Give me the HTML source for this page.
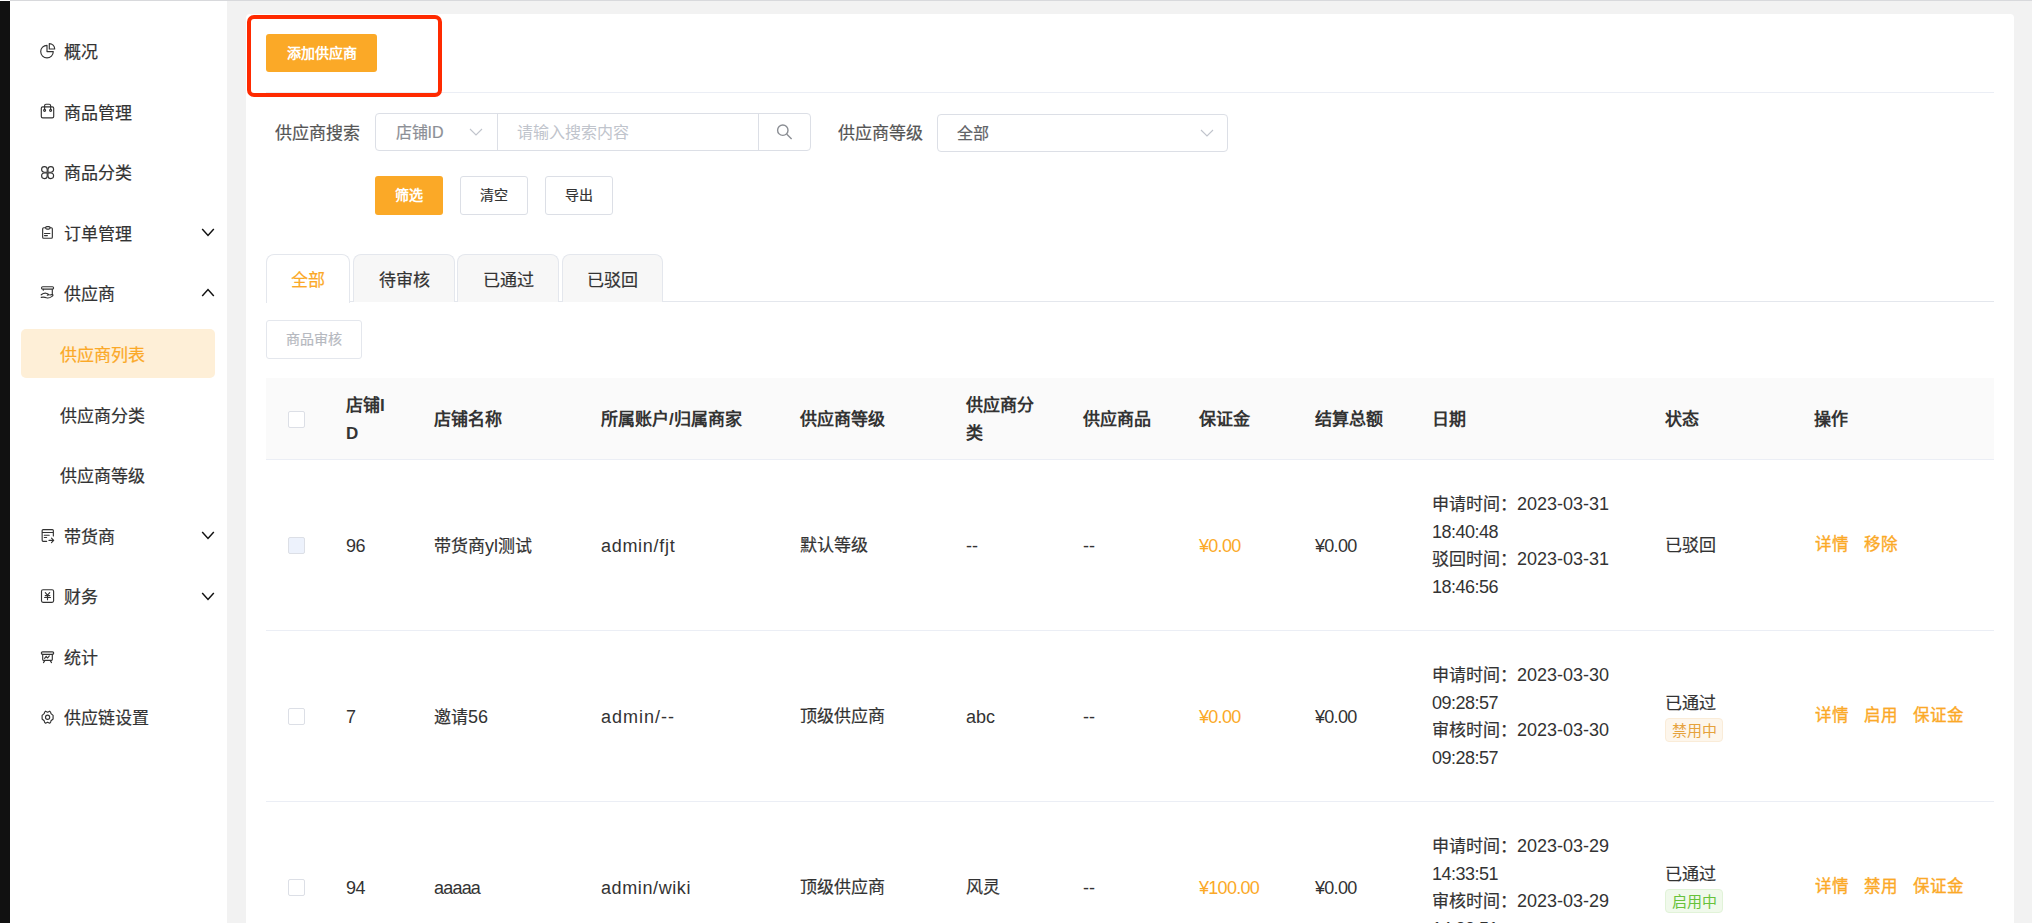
<!DOCTYPE html>
<html lang="zh-CN"><head><meta charset="utf-8">
<style>
*{box-sizing:border-box;margin:0;padding:0}
html,body{width:2032px;height:923px;overflow:hidden}
body{position:relative;background:#f2f2f2;font-family:"Liberation Sans",sans-serif;color:#333;font-size:17px}
.a{position:absolute}
.topline{left:10px;top:0;width:2022px;height:1px;background:#d8d9dc}
.black{left:0;top:1px;width:10px;height:922px;background:#111}
.side{left:10px;top:1px;width:217px;height:922px;background:#fff}
.mt{position:absolute;left:64px;height:30px;line-height:30px;font-size:17px;color:#333;white-space:nowrap}
.mt.sub{left:59.5px}
svg.ic{position:absolute;left:38px;width:20px;height:20px}
svg.ch{position:absolute;left:200px;width:16px;height:16px}
.active{left:21px;top:329px;width:194px;height:49px;background:#feefd7;border-radius:5px}
.card{left:246px;top:14px;width:1768px;height:920px;background:#fff;border-radius:4px}
.redbox{left:247px;top:15px;width:195px;height:82px;border:4px solid #ff2a00;border-radius:7px}
.btn{position:absolute;height:38px;line-height:38px;text-align:center;font-size:14px;border-radius:3px;white-space:nowrap}
.pri{background:#fba927;color:#fff;font-weight:bold}
.def{background:#fff;border:1px solid #dcdfe6;color:#333;line-height:36px}
.divider{left:266px;top:92px;width:1728px;height:1px;background:#ebeef5}
.lbl{position:absolute;font-size:17px;color:#555;line-height:30px;white-space:nowrap}
.inp{position:absolute;border:1px solid #dcdfe6;border-radius:4px;background:#fff}
.tab{position:absolute;top:254px;height:48px;border:1px solid #e4e7ed;border-bottom:none;border-radius:8px 8px 0 0;background:#f7f7f7;text-align:center;line-height:51.5px;font-size:17px;color:#333}
.tab.on{background:#fff;color:#fba927;height:49px}
.th{position:absolute;font-weight:bold;color:#333;line-height:28px;font-size:17px;white-space:nowrap}
.td{position:absolute;color:#333;line-height:28px;font-size:17px;white-space:nowrap}
.cb{position:absolute;left:288px;width:16.5px;height:17px;border:1px solid #dcdfe6;border-radius:2px;background:#fff}
.cb.dis{background:#edf2fc;border-color:#dcdfe6}
.hline{position:absolute;left:266px;width:1728px;height:1px;background:#ebeef5}
.org{color:#fba927}
.lk{color:#fba927;font-weight:normal;font-size:16.5px;margin-right:15px}
.l{font-size:18px;-webkit-text-stroke-width:0}
.mt,.lbl,.td,.tab,.def{-webkit-text-stroke-width:0.2px}
.tag{-webkit-text-stroke-width:0}
.lk{-webkit-text-stroke-width:0.35px}
.tag{position:absolute;height:24px;line-height:24px;font-size:15px;padding:0 5.6px;border-radius:4px;border:1px solid}
.tag.w{background:#fdf6ec;border-color:#faecd8;color:#e6a23c}
.tag.g{background:#f0f9eb;border-color:#e1f3d8;color:#67c23a}
</style></head><body>
<div class="a" style="left:0;top:0;width:10px;height:1px;background:#fff"></div>
<div class="a topline"></div>
<div class="a black"></div>
<div class="a side"></div>
<div class="a active"></div>
<div class="mt" style="top:38.00px;color:#333">概况</div>
<svg class="ic" style="top:40.60px" viewBox="0 0 20 20"><path fill="none" stroke="#333" stroke-width="1.15" stroke-linecap="round" stroke-linejoin="round" d="M9 4.3A6.3 6.3 0 1 0 15.3 10.6H9Z"/><path fill="none" stroke="#333" stroke-width="1.15" stroke-linecap="round" stroke-linejoin="round" d="M11.3 2.6A5.4 5.4 0 0 1 16.7 8H11.3Z"/></svg>
<div class="mt" style="top:98.59px;color:#333">商品管理</div>
<svg class="ic" style="top:101.19px" viewBox="0 0 20 20"><rect fill="none" stroke="#333" stroke-width="1.15" stroke-linecap="round" stroke-linejoin="round" x="3.3" y="5.8" width="12.4" height="11" rx="1.4"/><path fill="none" stroke="#333" stroke-width="1.15" stroke-linecap="round" stroke-linejoin="round" d="M6.6 8.4V4.6Q6.6 3.2 8 3.2H11.2Q12.6 3.2 12.6 4.6V8.4"/><circle fill="none" stroke="#333" stroke-width="1.15" stroke-linecap="round" stroke-linejoin="round" cx="6.6" cy="9.3" r="1"/><circle fill="none" stroke="#333" stroke-width="1.15" stroke-linecap="round" stroke-linejoin="round" cx="12.6" cy="9.3" r="1"/></svg>
<div class="mt" style="top:159.18px;color:#333">商品分类</div>
<svg class="ic" style="top:161.78px" viewBox="0 0 20 20"><path fill="none" stroke="#333" stroke-width="1.15" stroke-linecap="round" stroke-linejoin="round" d="M9.2 10.2V7.3A2.8 2.8 0 1 0 6.3 10.2Z"/><path fill="none" stroke="#333" stroke-width="1.15" stroke-linecap="round" stroke-linejoin="round" d="M10 10.2V7.3A2.8 2.8 0 1 1 12.9 10.2Z"/><path fill="none" stroke="#333" stroke-width="1.15" stroke-linecap="round" stroke-linejoin="round" d="M9.2 11V13.9A2.8 2.8 0 1 1 6.3 11Z"/><path fill="none" stroke="#333" stroke-width="1.15" stroke-linecap="round" stroke-linejoin="round" d="M10 11V13.9A2.8 2.8 0 1 0 12.9 11Z"/></svg>
<div class="mt" style="top:219.77px;color:#333">订单管理</div>
<svg class="ic" style="top:222.00px" viewBox="0 0 20 20"><path fill="none" stroke="#333" stroke-width="1.15" stroke-linecap="round" stroke-linejoin="round" d="M7.6 5.75H5.65Q4.65 5.75 4.65 6.75V15.25Q4.65 16.25 5.65 16.25H13.35Q14.35 16.25 14.35 15.25V6.75Q14.35 5.75 13.35 5.75H12.1"/><rect fill="none" stroke="#333" stroke-width="1.15" stroke-linecap="round" stroke-linejoin="round" x="7.6" y="4.6" width="4.5" height="2.5" rx="1.25"/><path fill="none" stroke="#333" stroke-width="1.15" stroke-linecap="round" stroke-linejoin="round" d="M6.5 11.5H11.9M6.5 13.6H9.4"/></svg>
<svg class="ch" style="top:224.17px" viewBox="0 0 16 16"><path d="M2.2 5L8 11.4L13.8 5" fill="none" stroke="#111" stroke-width="1.5"/></svg>
<div class="mt" style="top:280.36px;color:#333">供应商</div>
<svg class="ic" style="top:282.96px" viewBox="0 0 20 20"><rect fill="none" stroke="#333" stroke-width="1.15" stroke-linecap="round" stroke-linejoin="round" x="3.5" y="3.7" width="12.1" height="2.4" rx="1.2"/><path fill="none" stroke="#333" stroke-width="1.15" stroke-linecap="round" stroke-linejoin="round" d="M14.3 6.2V10.4M5.3 6.2V7.2"/><path fill="none" stroke="#333" stroke-width="1.15" stroke-linecap="round" stroke-linejoin="round" d="M3.2 11.8Q5.5 10 8 10.2Q9.6 10.4 11 11.6L9.3 12.2M3.2 14.4Q6 13.8 8.5 14.8Q11 15.6 14 13.4Q15.6 12.2 14.6 11.4L12 12"/></svg>
<svg class="ch" style="top:284.46px;left:199.5px" viewBox="0 0 16 16"><path d="M2.2 12L8 5.6L13.8 12" fill="none" stroke="#111" stroke-width="1.5"/></svg>
<div class="mt sub" style="top:340.95px;color:#fba927">供应商列表</div>
<div class="mt sub" style="top:401.54px;color:#333">供应商分类</div>
<div class="mt sub" style="top:462.13px;color:#333">供应商等级</div>
<div class="mt" style="top:522.72px;color:#333">带货商</div>
<svg class="ic" style="top:525.00px" viewBox="0 0 20 20"><path fill="none" stroke="#333" stroke-width="1.15" stroke-linecap="round" stroke-linejoin="round" d="M8.7 16.35H5.15Q4.15 16.35 4.15 15.35V5.55Q4.15 4.55 5.15 4.55H14.35Q15.35 4.55 15.35 5.55V11M4.15 7.5H15.35"/><path fill="none" stroke="#333" stroke-width="1.15" stroke-linecap="round" stroke-linejoin="round" d="M6.3 10.2H11.2M6.3 12.5H8.6M11 15.4H15.5M13.5 13.2L15.7 15.4L13.5 17.6"/></svg>
<svg class="ch" style="top:527.12px" viewBox="0 0 16 16"><path d="M2.2 5L8 11.4L13.8 5" fill="none" stroke="#111" stroke-width="1.5"/></svg>
<div class="mt" style="top:583.31px;color:#333">财务</div>
<svg class="ic" style="top:585.91px" viewBox="0 0 20 20"><rect fill="none" stroke="#333" stroke-width="1.15" stroke-linecap="round" stroke-linejoin="round" x="3.5" y="3.7" width="12.1" height="12.6" rx="1.5"/><path fill="none" stroke="#333" stroke-width="1.15" stroke-linecap="round" stroke-linejoin="round" d="M7.3 6.6L9.5 9.1L11.7 6.6M6.6 11.5H12.5M7.2 9.6H11.8M9.5 9.1V13.7"/></svg>
<svg class="ch" style="top:587.71px" viewBox="0 0 16 16"><path d="M2.2 5L8 11.4L13.8 5" fill="none" stroke="#111" stroke-width="1.5"/></svg>
<div class="mt" style="top:643.90px;color:#333">统计</div>
<svg class="ic" style="top:646.50px" viewBox="0 0 20 20"><rect fill="none" stroke="#333" stroke-width="1.15" stroke-linecap="round" stroke-linejoin="round" x="3.3" y="4.8" width="12.4" height="2.6" rx="1.3"/><path fill="none" stroke="#333" stroke-width="1.15" stroke-linecap="round" stroke-linejoin="round" d="M4.7 7.4V12.6Q4.7 13.4 5.5 13.4H13.5Q14.3 13.4 14.3 12.6V7.4M6.9 13.4L5.5 15.6M12.1 13.4L13.5 15.6M6.6 11.3L8.2 9.3L9.6 11L11.3 8.9"/></svg>
<div class="mt" style="top:704.49px;color:#333">供应链设置</div>
<svg class="ic" style="top:707.09px" viewBox="0 0 20 20"><path fill="none" stroke="#333" stroke-width="1.15" stroke-linecap="round" stroke-linejoin="round" d="M7.5 4.2L9.6 5.2L11.7 4.2Q12.9 5 13 6.6L15.1 8.4L15.1 12L13 13.8Q12.9 15.4 11.7 16.2L9.6 15.2L7.5 16.2Q6.3 15.4 6.2 13.8L4.1 12L4.1 8.4L6.2 6.6Q6.3 5 7.5 4.2Z"/><circle fill="none" stroke="#333" stroke-width="1.15" stroke-linecap="round" stroke-linejoin="round" cx="9.6" cy="10.2" r="2.1"/></svg>
<div class="a card"></div>
<div class="btn pri" style="left:266px;top:34px;width:111px">添加供应商</div>
<div class="a divider"></div>

<div class="lbl" style="left:275px;top:119px">供应商搜索</div>
<div class="inp" style="left:375px;top:113px;width:436px;height:38px"></div>
<div class="a" style="left:497px;top:113px;width:1px;height:38px;background:#dcdfe6"></div>
<div class="a" style="left:758px;top:113px;width:1px;height:38px;background:#dcdfe6"></div>
<div class="lbl" style="left:395.5px;top:118px;font-size:16px;color:#8c8f96">店铺ID</div>
<svg class="a" style="left:466px;top:124px;width:20px;height:16px" viewBox="0 0 20 16"><path d="M4 5L10 11L16 5" fill="none" stroke="#c0c4cc" stroke-width="1.1"/></svg>
<div class="lbl" style="left:516.5px;top:118px;font-size:16px;color:#c0c4cc;-webkit-text-stroke-width:0">请输入搜索内容</div>
<svg class="a" style="left:774px;top:122px;width:20px;height:20px" viewBox="0 0 20 20"><circle cx="8.8" cy="8.2" r="5.2" fill="none" stroke="#8a8d93" stroke-width="1.4"/><path d="M12.6 12L17.6 17" stroke="#8a8d93" stroke-width="1.4"/></svg>
<div class="lbl" style="left:838px;top:119px">供应商等级</div>
<div class="inp" style="left:937px;top:114.3px;width:291px;height:38px"></div>
<div class="lbl" style="left:957px;top:119.3px;font-size:16px;color:#606266">全部</div>
<svg class="a" style="left:1197px;top:125.3px;width:20px;height:16px" viewBox="0 0 20 16"><path d="M4 5L10 11L16 5" fill="none" stroke="#c0c4cc" stroke-width="1.1"/></svg>

<div class="btn pri" style="left:375px;top:176px;width:68px;height:39px;line-height:39px">筛选</div>
<div class="btn def" style="left:460px;top:176px;width:68px;height:39px;line-height:37px">清空</div>
<div class="btn def" style="left:545px;top:176px;width:68px;height:39px;line-height:37px">导出</div>

<div class="a" style="left:266px;top:301px;width:1728px;height:1px;background:#e4e7ed"></div>
<div class="tab on" style="left:266px;width:84px">全部</div>
<div class="tab" style="left:353px;width:102px">待审核</div>
<div class="tab" style="left:457px;width:102px">已通过</div>
<div class="tab" style="left:562px;width:101px">已驳回</div>

<div class="btn def" style="left:266px;top:320px;width:96px;height:39px;line-height:37px;color:#b6b9c0;border-color:#e4e7ed">商品审核</div>

<div class="a" style="left:266px;top:378px;width:1728px;height:81px;background:#fafafa"></div>
<div class="hline" style="top:459px"></div>
<div class="cb" style="top:411px"></div>
<div class="th" style="left:346px;top:392.4px">店铺I</div>
<div class="th" style="left:346px;top:420.0px">D</div>
<div class="th" style="left:434px;top:406.2px">店铺名称</div>
<div class="th" style="left:601px;top:406.2px">所属账户/归属商家</div>
<div class="th" style="left:800px;top:406.2px">供应商等级</div>
<div class="th" style="left:966px;top:392.4px">供应商分</div>
<div class="th" style="left:966px;top:420.0px">类</div>
<div class="th" style="left:1083px;top:406.2px">供应商品</div>
<div class="th" style="left:1199px;top:406.2px">保证金</div>
<div class="th" style="left:1315px;top:406.2px">结算总额</div>
<div class="th" style="left:1432px;top:406.2px">日期</div>
<div class="th" style="left:1665px;top:406.2px">状态</div>
<div class="th" style="left:1814px;top:406.2px">操作</div>
<div class="cb dis" style="top:536.5px"></div>
<div class="td" style="left:346px;top:531.5px"><span class="l" style="letter-spacing:-0.5px">96</span></div>
<div class="td" style="left:434px;top:531.5px">带货商<span class="l">yl</span>测试</div>
<div class="td" style="left:601px;top:531.5px"><span class="l" style="letter-spacing:0.7px">admin/fjt</span></div>
<div class="td" style="left:800px;top:531.5px">默认等级</div>
<div class="td" style="left:966px;top:531.5px"><span class="l">--</span></div>
<div class="td" style="left:1083px;top:531.5px"><span class="l">--</span></div>
<div class="td" style="left:1199px;top:531.5px"><span class="l org" style="letter-spacing:-0.7px">¥0.00</span></div>
<div class="td" style="left:1315px;top:531.5px"><span class="l" style="letter-spacing:-0.7px">¥0.00</span></div>
<div class="td" style="left:1432px;top:489.9px">申请时间：<span class="l">2023-03-31</span></div>
<div class="td" style="left:1432px;top:517.6px"><span class="l" style="letter-spacing:-0.5px">18:40:48</span></div>
<div class="td" style="left:1432px;top:545.2px">驳回时间：<span class="l">2023-03-31</span></div>
<div class="td" style="left:1432px;top:572.9px"><span class="l" style="letter-spacing:-0.5px">18:46:56</span></div>
<div class="td" style="left:1665px;top:532.0px">已驳回</div>
<div class="td acts" style="left:1815px;top:530.0px"><span class="lk">详情</span><span class="lk">移除</span></div>
<div class="hline" style="top:630px"></div>
<div class="cb" style="top:707.5px"></div>
<div class="td" style="left:346px;top:702.5px"><span class="l" style="letter-spacing:-0.5px">7</span></div>
<div class="td" style="left:434px;top:702.5px">邀请<span class="l">56</span></div>
<div class="td" style="left:601px;top:702.5px"><span class="l" style="letter-spacing:1.0px">admin/--</span></div>
<div class="td" style="left:800px;top:702.5px">顶级供应商</div>
<div class="td" style="left:966px;top:702.5px"><span class="l">abc</span></div>
<div class="td" style="left:1083px;top:702.5px"><span class="l">--</span></div>
<div class="td" style="left:1199px;top:702.5px"><span class="l org" style="letter-spacing:-0.7px">¥0.00</span></div>
<div class="td" style="left:1315px;top:702.5px"><span class="l" style="letter-spacing:-0.7px">¥0.00</span></div>
<div class="td" style="left:1432px;top:660.9px">申请时间：<span class="l">2023-03-30</span></div>
<div class="td" style="left:1432px;top:688.6px"><span class="l" style="letter-spacing:-0.5px">09:28:57</span></div>
<div class="td" style="left:1432px;top:716.2px">审核时间：<span class="l">2023-03-30</span></div>
<div class="td" style="left:1432px;top:743.9px"><span class="l" style="letter-spacing:-0.5px">09:28:57</span></div>
<div class="td" style="left:1665px;top:689.8px">已通过</div>
<div class="tag w" style="left:1665px;top:718.0px">禁用中</div>
<div class="td acts" style="left:1815px;top:701.0px"><span class="lk">详情</span><span class="lk">启用</span><span class="lk">保证金</span></div>
<div class="hline" style="top:801px"></div>
<div class="cb" style="top:878.5px"></div>
<div class="td" style="left:346px;top:873.5px"><span class="l" style="letter-spacing:-0.5px">94</span></div>
<div class="td" style="left:434px;top:873.5px"><span class="l" style="letter-spacing:-0.8px">aaaaa</span></div>
<div class="td" style="left:601px;top:873.5px"><span class="l" style="letter-spacing:0.6px">admin/wiki</span></div>
<div class="td" style="left:800px;top:873.5px">顶级供应商</div>
<div class="td" style="left:966px;top:873.5px">风灵</div>
<div class="td" style="left:1083px;top:873.5px"><span class="l">--</span></div>
<div class="td" style="left:1199px;top:873.5px"><span class="l org" style="letter-spacing:-0.7px">¥100.00</span></div>
<div class="td" style="left:1315px;top:873.5px"><span class="l" style="letter-spacing:-0.7px">¥0.00</span></div>
<div class="td" style="left:1432px;top:831.9px">申请时间：<span class="l">2023-03-29</span></div>
<div class="td" style="left:1432px;top:859.6px"><span class="l" style="letter-spacing:-0.5px">14:33:51</span></div>
<div class="td" style="left:1432px;top:887.2px">审核时间：<span class="l">2023-03-29</span></div>
<div class="td" style="left:1432px;top:914.9px"><span class="l" style="letter-spacing:-0.5px">14:33:51</span></div>
<div class="td" style="left:1665px;top:860.8px">已通过</div>
<div class="tag g" style="left:1665px;top:889.0px">启用中</div>
<div class="td acts" style="left:1815px;top:872.0px"><span class="lk">详情</span><span class="lk">禁用</span><span class="lk">保证金</span></div>
<div class="a redbox"></div>
</body></html>
